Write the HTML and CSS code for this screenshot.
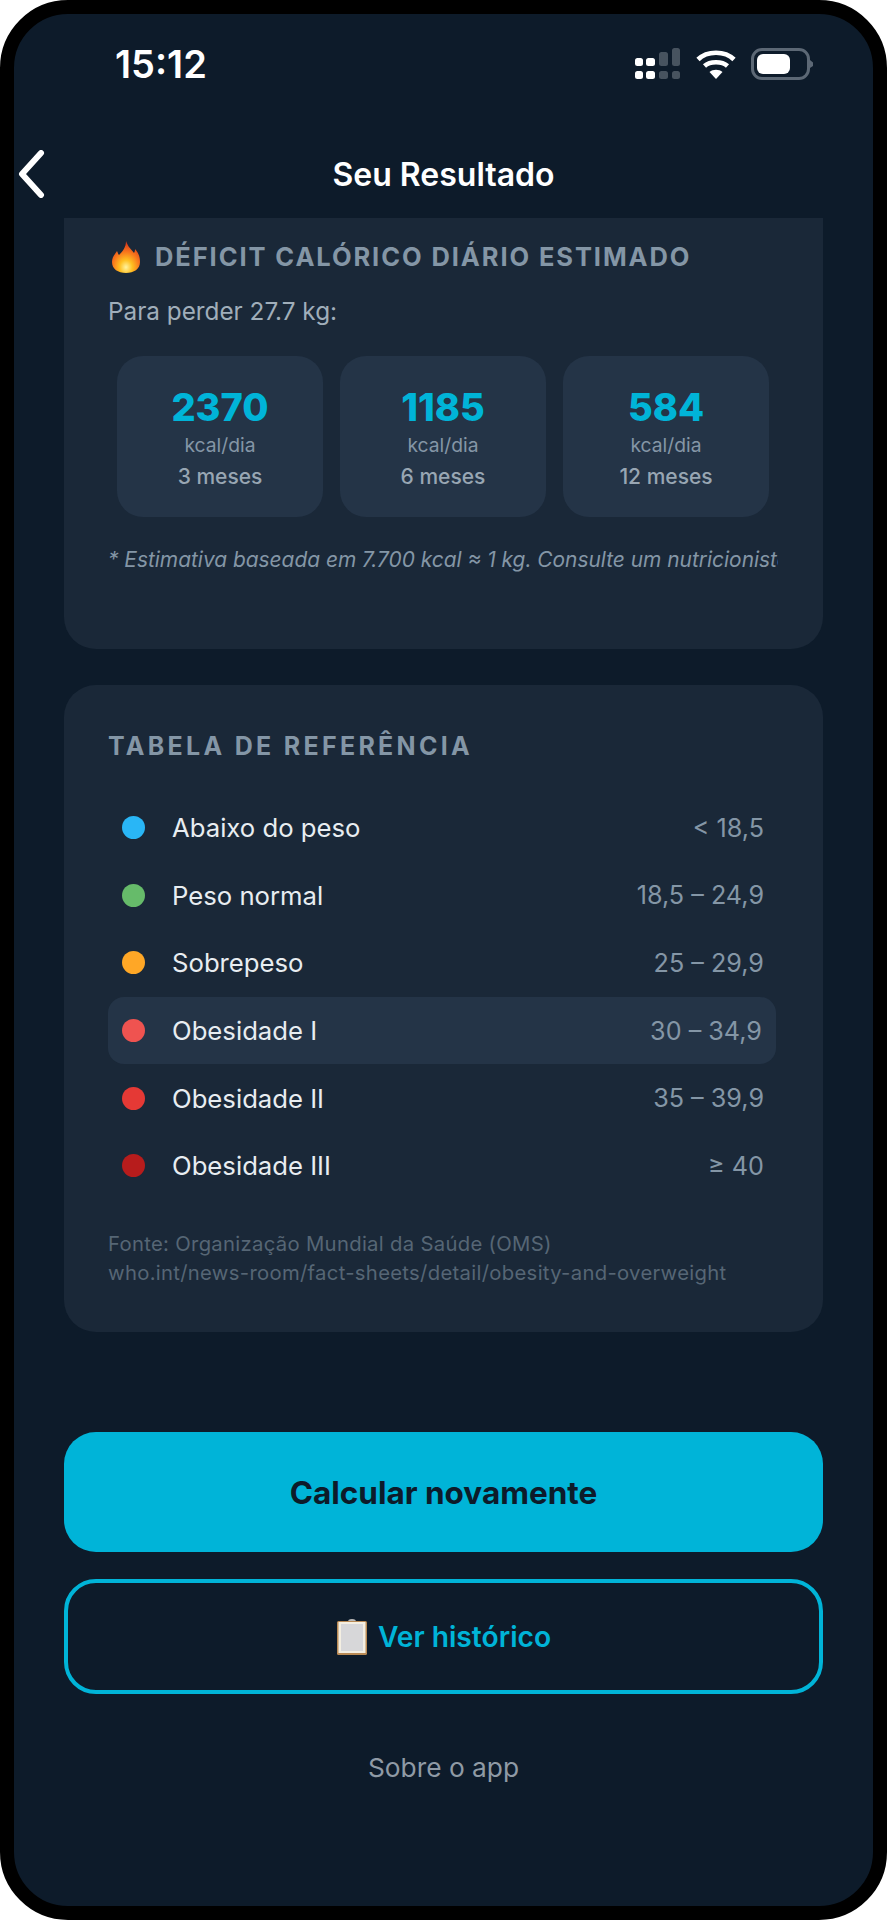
FILE: index.html
```html
<!DOCTYPE html>
<html lang="pt-BR">

<head>
    <meta charset="UTF-8">
    <meta name="viewport" content="width=device-width, initial-scale=1.0">
    <title>Seu Resultado</title>
    <link rel="stylesheet" href="styles.css">
</head>

<body>
    <div class="phone">
        <div class="status-bar">
            <span class="status-time">15:12</span>
            <svg class="status-icons" width="178" height="32" viewBox="0 0 178 32">
                <!-- signal -->
                <g fill="#fff">
                    <rect x="0" y="10" width="8" height="8" rx="2.5" />
                    <rect x="0" y="23" width="8" height="8" rx="2.5" />
                    <rect x="11" y="10" width="9" height="8" rx="2.5" />
                    <rect x="11" y="23" width="9" height="8" rx="2.5" />
                </g>
                <g fill="#47535f">
                    <rect x="24" y="4" width="9" height="14" rx="2.5" />
                    <rect x="24" y="23" width="9" height="8" rx="2.5" />
                    <rect x="37" y="0" width="8" height="18" rx="2.5" />
                    <rect x="37" y="23" width="8" height="8" rx="2.5" />
                </g>
                <!-- wifi -->
                <g fill="none" stroke="#fff" stroke-width="4.6">
                    <path d="M63 11.5 C72 2.5 90 2.500 99 11.500" />
                    <path d="M69.500 18 C75 13 87 13 92.500 18" />
                </g>
                <path d="M74.500 24 C78 21 84 21 87.500 24 L81 31 Z" fill="#fff" />
                <!-- battery -->
                <rect x="117.500" y="1.500" width="56" height="29" rx="9.500" fill="none" stroke="#5c6875" stroke-width="3" />
                <rect x="122" y="6" width="33" height="20" rx="6" fill="#fff" />
                <path d="M175 12 L178 14.500 V18 L175 20 Z" fill="#5c6875" />
            </svg>
        </div>

        <div class="nav-bar">
            <svg class="nav-back" width="28" height="48" viewBox="0 0 28 48">
                <path d="M24 3 L5 24 L24 45" fill="none" stroke="#fff" stroke-width="6" stroke-linecap="round" stroke-linejoin="round" />
            </svg>
            <h1 class="nav-title">Seu Resultado</h1>
        </div>

        <div class="content">
            <section class="card card-deficit">
                <h2 class="card-title card-title-deficit">
                    <svg class="title-icon" width="30" height="34" viewBox="0 0 30 34">
                        <defs>
                            <radialGradient id="flame" cx="50%" cy="82%" r="75%">
                                <stop offset="0" stop-color="#fff3a0" />
                                <stop offset="0.3" stop-color="#ffc021" />
                                <stop offset="0.65" stop-color="#f8741c" />
                                <stop offset="1" stop-color="#d8391b" />
                            </radialGradient>
                        </defs>
                        <path d="M15 1 C17 7 20 9 23 13 C24 11 24 10 24 9 C28 13 29 18 29 22 C29 29 23 33 15 33 C7 33 1 29 1 22 C1 17 4 14 6 11 C7 13 7 14 8 15 C12 11 15 7 15 1 Z" fill="url(#flame)" />
                    </svg>
                    DÉFICIT CALÓRICO DIÁRIO ESTIMADO
                </h2>
                <p class="deficit-sub">Para perder 27.7 kg:</p>
                <div class="stats">
                    <div class="stat">
                        <div class="stat-value">2370</div>
                        <div class="stat-unit">kcal/dia</div>
                        <div class="stat-period">3 meses</div>
                    </div>
                    <div class="stat">
                        <div class="stat-value">1185</div>
                        <div class="stat-unit">kcal/dia</div>
                        <div class="stat-period">6 meses</div>
                    </div>
                    <div class="stat">
                        <div class="stat-value">584</div>
                        <div class="stat-unit">kcal/dia</div>
                        <div class="stat-period">12 meses</div>
                    </div>
                </div>
                <p class="deficit-note">* Estimativa baseada em 7.700 kcal ≈ 1 kg. Consulte um nutricionista.</p>
            </section>

            <section class="card card-table">
                <h2 class="card-title card-title-table">TABELA DE REFERÊNCIA</h2>
                <div class="ref-list">
                    <div class="ref-row">
                        <span class="ref-dot dot-blue"></span>
                        <span class="ref-label">Abaixo do peso</span>
                        <span class="ref-value">&lt; 18,5</span>
                    </div>
                    <div class="ref-row">
                        <span class="ref-dot dot-green"></span>
                        <span class="ref-label">Peso normal</span>
                        <span class="ref-value">18,5 – 24,9</span>
                    </div>
                    <div class="ref-row">
                        <span class="ref-dot dot-orange"></span>
                        <span class="ref-label">Sobrepeso</span>
                        <span class="ref-value">25 – 29,9</span>
                    </div>
                    <div class="ref-row active">
                        <span class="ref-dot dot-coral"></span>
                        <span class="ref-label">Obesidade I</span>
                        <span class="ref-value">30 – 34,9</span>
                    </div>
                    <div class="ref-row">
                        <span class="ref-dot dot-red"></span>
                        <span class="ref-label">Obesidade II</span>
                        <span class="ref-value">35 – 39,9</span>
                    </div>
                    <div class="ref-row">
                        <span class="ref-dot dot-darkred"></span>
                        <span class="ref-label">Obesidade III</span>
                        <span class="ref-value">≥ 40</span>
                    </div>
                </div>
                <p class="ref-source">Fonte: Organização Mundial da Saúde (OMS)<br>who.int/news-room/fact-sheets/detail/obesity-and-overweight</p>
            </section>

            <button class="btn btn-primary">Calcular novamente</button>
            <button class="btn btn-outline">
                <svg class="btn-icon" width="32" height="38" viewBox="0 0 32 38">
                    <path d="M12 4 C12 2 13 1 16 1 C19 1 20 2 20 4 Z" fill="#b9b9b9" />
                    <rect x="1" y="3" width="30" height="34" rx="1.500" fill="#b98a55" />
                    <rect x="2.500" y="4" width="27" height="31" fill="#f4efe2" />
                    <rect x="5" y="6" width="22" height="27" fill="#d7d7d9" />
                </svg>
                Ver histórico
            </button>
            <a class="about-link">Sobre o app</a>
        </div>
    </div>
</body>

</html>
```

FILE: styles.css
```css
* {
    margin: 0;
    padding: 0;
    box-sizing: border-box;
}

body {
    background: #fff;
    font-family: Inter, "Liberation Sans", sans-serif;
}

.phone {
    width: 887px;
    height: 1920px;
    border: 14px solid #000;
    border-radius: 68px;
    background: #0d1b2a;
    overflow: hidden;
    display: flex;
    flex-direction: column;
}

.status-bar {
    height: 116px;
    padding: 34px 60px 0 101px;
    display: flex;
    justify-content: space-between;
    align-items: flex-start;
    flex-shrink: 0;
}

.status-time {
    font-size: 38px;
    line-height: 32px;
    font-weight: 600;
    color: #fff;
}

.nav-bar {
    height: 88px;
    padding-left: 3px;
    position: relative;
    display: flex;
    align-items: center;
    flex-shrink: 0;
}

.nav-title {
    position: absolute;
    left: 0;
    right: 0;
    text-align: center;
    font-size: 32px;
    font-weight: 600;
    color: #fff;
}

.content {
    flex: 1;
    padding: 0 50px;
    display: flex;
    flex-direction: column;
    overflow: hidden;
}

.card {
    flex-shrink: 0;
    background: #1a2838;
    border-radius: 32px;
    padding-left: 44px;
    padding-right: 45px;
}

.card-deficit {
    height: 431px;
    padding-top: 22px;
    border-radius: 0 0 32px 32px;
}

.card-table {
    height: 647px;
    margin-top: 36px;
    padding-top: 46px;
}

.card-title {
    font-size: 25px;
    line-height: 30px;
    font-weight: 700;
    color: #8496a6;
}

.card-title-deficit {
    display: flex;
    align-items: center;
    gap: 14px;
    font-size: 25.500px;
    letter-spacing: 1.900px;
}

.card-title-table {
    letter-spacing: 3.300px;
}

.title-icon {
    flex-shrink: 0;
    margin-left: 3px;
}

.deficit-sub {
    margin-top: 23px;
    font-size: 24.300px;
    line-height: 28px;
    color: #a0aeba;
}

.stats {
    margin-top: 31px;
    padding: 0 9px;
    display: flex;
    gap: 17px;
}

.stat {
    flex: 1;
    height: 161px;
    padding-top: 29px;
    background: #243447;
    border-radius: 26px;
    text-align: center;
}

.stat-value {
    font-size: 38px;
    line-height: 44px;
    font-weight: 800;
    color: #00b4d8;
}

.stat-unit {
    margin-top: 4px;
    font-size: 19.300px;
    line-height: 24px;
    color: #8496a6;
}

.stat-period {
    margin-top: 8px;
    font-size: 21px;
    line-height: 24px;
    font-weight: 500;
    color: #98a6b3;
}

.deficit-note {
    margin-top: 29px;
    font-size: 20.900px;
    line-height: 28px;
    font-style: italic;
    color: #8496a6;
    white-space: nowrap;
    overflow: hidden;
    width: 670px;
}

.ref-list {
    margin-top: 33px;
}

.ref-row {
    height: 67.600px;
    padding: 0 14px;
    display: flex;
    align-items: center;
    border-radius: 16px;
}

.ref-row.active {
    background: #243447;
    margin-right: 2px;
}

.ref-dot {
    width: 23px;
    height: 23px;
    border-radius: 50%;
    margin-right: 27px;
}

.dot-blue {
    background: #29b6f6;
}

.dot-green {
    background: #66bb6a;
}

.dot-orange {
    background: #ffa726;
}

.dot-coral {
    background: #ef5350;
}

.dot-red {
    background: #e53935;
}

.dot-darkred {
    background: #b71c1c;
}

.ref-label {
    flex: 1;
    font-size: 25.700px;
    color: #e8edf1;
}

.ref-value {
    font-size: 25.200px;
    color: #8496a6;
}

.ref-source {
    margin-top: 29px;
    font-size: 20.300px;
    line-height: 29px;
    letter-spacing: 0.300px;
    color: #566675;
}

.btn {
    flex-shrink: 0;
    display: flex;
    align-items: center;
    justify-content: center;
    width: 100%;
    font-family: inherit;
    border-radius: 32px;
}

.btn-primary {
    height: 120px;
    margin-top: 100px;
    border: none;
    background: #00b4d8;
    font-size: 31.500px;
    font-weight: 700;
    color: #0d1b2a;
}

.btn-outline {
    height: 115px;
    margin-top: 27px;
    gap: 10px;
    border: 4px solid #00b4d8;
    background: transparent;
    font-size: 28.200px;
    font-weight: 600;
    color: #00b4d8;
}

.about-link {
    margin-top: 59px;
    text-align: center;
    font-size: 26.300px;
    line-height: 30px;
    color: #8f9aa5;
}
```
